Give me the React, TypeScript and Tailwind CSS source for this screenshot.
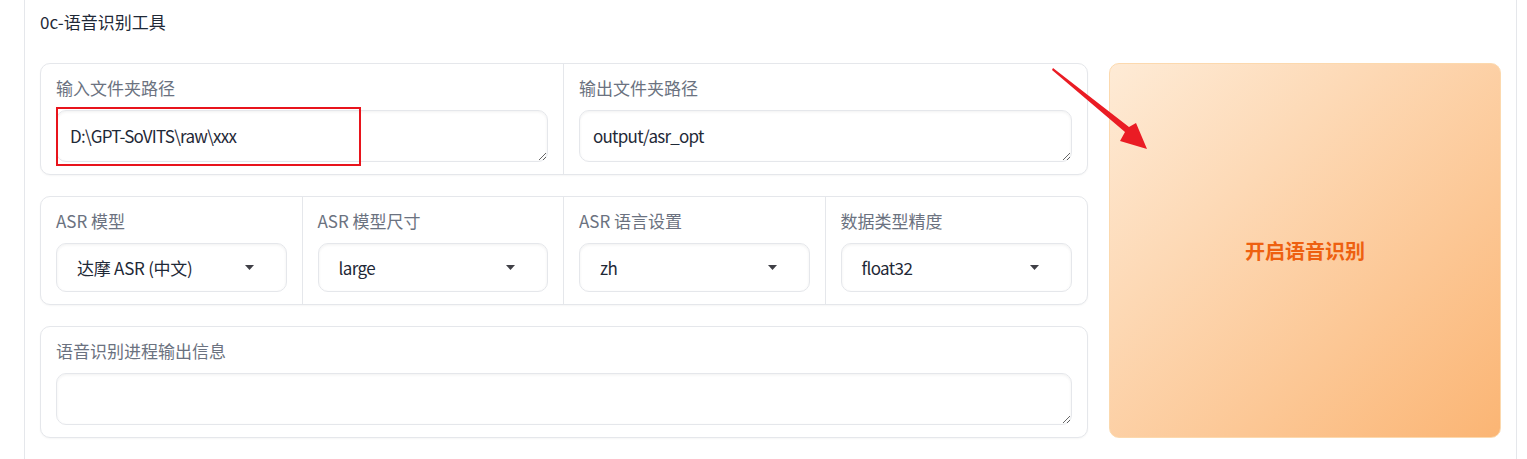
import React from "react";

const FONT = { fontFamily: '"Noto Sans CJK SC", "Noto Sans", sans-serif' };

function Caret() {
  return (
    <svg width="9" height="5" viewBox="0 0 9 5" className="shrink-0">
      <path d="M0 0 L9 0 L4.5 5 Z" fill="#3f3f46" />
    </svg>
  );
}

function TextBox({ label, value }: { label: string; value: string }) {
  return (
    <div className="flex flex-col px-[15px] pt-[12px] pb-[12px]">
      <div className="h-[24px] leading-[24px] text-[17px] text-[#6b7280]">{label}</div>
      <textarea
        readOnly
        defaultValue={value}
        rows={1}
        className="mt-[10px] h-[52px] w-full rounded-[10px] border border-[#e5e7eb] bg-white px-[13px] py-[12px] text-[17px] leading-[26px] tracking-[-0.75px] text-[#1f2937] outline-none shadow-[inset_0_1px_3px_rgba(0,0,0,0.06)]"
        style={FONT}
      />
    </div>
  );
}

function DropBox({ label, value, tight }: { label: string; value: string; tight?: boolean }) {
  return (
    <div className="flex flex-col px-[15px] pt-[12px] pb-[12px]">
      <div className="h-[24px] leading-[24px] text-[17px] text-[#6b7280]">{label}</div>
      <div className="mt-[10px] flex h-[49px] items-center justify-between rounded-[10px] border border-[#e5e7eb] bg-white pl-[20px] pr-[32px] text-[17px] text-[#1f2937] shadow-[inset_0_1px_3px_rgba(0,0,0,0.06)]">
        <span className={tight ? "tracking-[-0.6px]" : "tracking-[-0.25px]"}>{value}</span>
        <Caret />
      </div>
    </div>
  );
}

export default function App() {
  return (
    <div className="relative h-[459px] w-[1527px] overflow-hidden bg-white" style={FONT}>
      <div className="ml-[24px] h-full w-[1493px] border-x border-[#e5e7eb] px-[15px]">
        <div className="pt-[10px] h-[34px] leading-[24px] text-[17px] text-[#1f2937]">0c-语音识别工具</div>
        <div className="mt-[29px] flex gap-[21px]">
          <div className="flex w-[1048px] shrink-0 flex-col gap-[21px]">
            <div className="grid grid-cols-2 divide-x divide-[#e5e7eb] rounded-[10px] border border-[#e5e7eb] bg-white shadow-[0_1px_2px_rgba(0,0,0,0.04)]">
              <TextBox label="输入文件夹路径" value="D:\GPT-SoVITS\raw\xxx" />
              <TextBox label="输出文件夹路径" value="output/asr_opt" />
            </div>
            <div className="grid grid-cols-4 divide-x divide-[#e5e7eb] rounded-[10px] border border-[#e5e7eb] bg-white shadow-[0_1px_2px_rgba(0,0,0,0.04)]">
              <DropBox label="ASR 模型" value="达摩 ASR (中文)" />
              <DropBox label="ASR 模型尺寸" value="large" tight />
              <DropBox label="ASR 语言设置" value="zh" tight />
              <DropBox label="数据类型精度" value="float32" tight />
            </div>
            <div className="rounded-[10px] border border-[#e5e7eb] bg-white shadow-[0_1px_2px_rgba(0,0,0,0.04)]">
              <TextBox label="语音识别进程输出信息" value="" />
            </div>
          </div>
          <button className="flex h-[375px] flex-1 items-center justify-center rounded-[10px] border border-[#fcd9ae] bg-[linear-gradient(to_bottom_right,#feebd6,#fbb574)] text-[20px] font-bold text-[#ee6010]">
            开启语音识别
          </button>
        </div>
      </div>

      {/* annotation overlays */}
      <div className="pointer-events-none absolute left-[56px] top-[107px] h-[59px] w-[305px] border-2 border-[#e8141c]" />
      <svg className="pointer-events-none absolute left-0 top-0" width="1527" height="459">
        <polygon
          points="1053,68 1129,127 1136,123 1147,149 1120,141 1125,132 1052,70"
          fill="#ea1c24"
        />
      </svg>
    </div>
  );
}
